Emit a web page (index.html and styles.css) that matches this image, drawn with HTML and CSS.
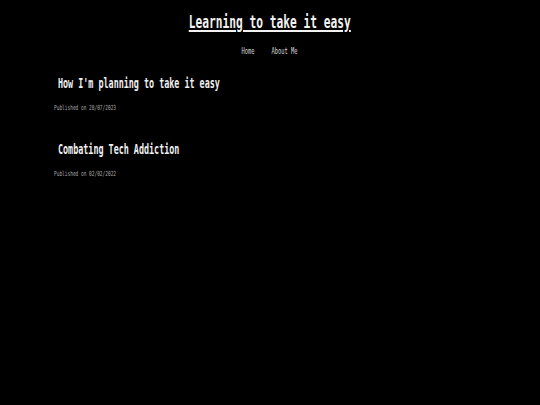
FILE: index.html
```html
<!DOCTYPE html>
<html>
<head>
<meta charset="utf-8">
<link rel="stylesheet" href="styles.css">
</head>
<body>
<header class="site-header">
  <h1 class="site-title"><a href="#">Learning to take it easy</a></h1>
  <nav class="nav">
    <a href="#">Home</a>
    <a href="#">About Me</a>
  </nav>
</header>
<main class="posts">
  <article class="post">
    <h2 class="post-title">How I'm planning to take it easy</h2>
    <p class="post-date">Published on 28/07/2023</p>
  </article>
  <article class="post">
    <h2 class="post-title">Combating Tech Addiction</h2>
    <p class="post-date">Published on 02/02/2022</p>
  </article>
</main>
</body>
</html>
```
FILE: styles.css
```css
html, body {
  margin: 0;
  padding: 0;
  background: #000;
  height: 100%;
}
body {
  font-family: "DejaVu Sans Mono", "Liberation Mono", monospace;
  color: #eee;
}
.site-header {
  padding-top: 12px;
  display: flex;
  flex-direction: column;
  align-items: center;
}
.site-title {
  margin: 0;
  font-size: 17px;
  line-height: 20px;
  font-weight: bold;
  transform: scaleX(0.66);
  transform-origin: center;
  white-space: nowrap;
}
.site-title a {
  color: #f2f2f2;
  text-decoration: underline;
  text-decoration-thickness: 2px;
  text-underline-offset: 2px;
}
.nav {
  margin-top: 13px;
  display: flex;
  gap: 28px;
  font-size: 9px;
  line-height: 12px;
  transform: scaleX(0.6);
  transform-origin: center;
  white-space: nowrap;
}
.nav a {
  color: #d8d8d8;
  text-decoration: none;
}
.posts {
  padding-left: 54px;
  margin-top: 17px;
}
.post {
  margin-bottom: 27px;
}
.post-title {
  margin: 0 0 0 4px;
  font-size: 14px;
  line-height: 18px;
  font-weight: bold;
  color: #f0f0f0;
  transform: scaleX(0.6);
  transform-origin: left;
  white-space: nowrap;
}
.post-date {
  margin: 11px 0 0 0;
  font-size: 7px;
  line-height: 10px;
  color: #a8a8a8;
  transform: scaleX(0.64);
  transform-origin: left;
  white-space: nowrap;
}
```
